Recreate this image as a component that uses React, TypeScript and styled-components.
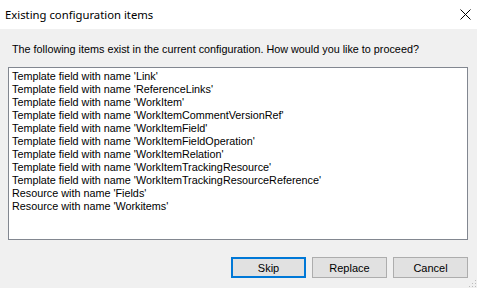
import styled, { createGlobalStyle } from "styled-components";

const GlobalStyle = createGlobalStyle`
  html, body {
    margin: 0;
    padding: 0;
    width: 477px;
    height: 288px;
    overflow: hidden;
    background: #f0f0f0;
  }
  * { box-sizing: border-box; }
`;

const Window = styled.div`
  width: 477px;
  height: 288px;
  display: flex;
  flex-direction: column;
  background: #f0f0f0;
  font-family: "Liberation Sans", Arial, sans-serif;
  font-size: 10.8px;
  color: #000;
  position: relative;
`;

const TitleBar = styled.div`
  height: 29px;
  background: #fff;
  display: flex;
  align-items: center;
  justify-content: space-between;
  padding-left: 5px;
`;

const Title = styled.div`
  font-family: "Noto Sans", "Open Sans", sans-serif;
  font-size: 11.3px;
  color: #000;
`;

const CloseButton = styled.div`
  width: 24px;
  height: 29px;
  display: flex;
  align-items: center;
  justify-content: center;
`;

const Body = styled.div`
  flex: 1;
  display: flex;
  flex-direction: column;
  padding: 14px 9px 0 8px;
`;

const Prompt = styled.div`
  padding-left: 4px;
  line-height: 13px;
  height: 13px;
`;

const ListBox = styled.div`
  margin-top: 11px;
  height: 173px;
  background: #fff;
  border: 1px solid #828790;
  padding: 2px 3px;
  display: flex;
  flex-direction: column;
`;

const ListItem = styled.div`
  height: 13px;
  line-height: 13px;
  white-space: nowrap;
`;

const ButtonRow = styled.div`
  margin-top: 17px;
  display: flex;
  justify-content: flex-end;
  gap: 6px;
`;

const Button = styled.div<{ $default?: boolean }>`
  width: 75px;
  height: 21px;
  display: flex;
  align-items: center;
  justify-content: center;
  background: #e1e1e1;
  border: ${(p) => (p.$default ? "2px solid #0078d7" : "1px solid #adadad")};
  font-size: 11px;
`;

const Grip = styled.svg`
  position: absolute;
  right: 0;
  bottom: 0;
`;

const items = [
  "Template field with name 'Link'",
  "Template field with name 'ReferenceLinks'",
  "Template field with name 'WorkItem'",
  "Template field with name 'WorkItemCommentVersionRef'",
  "Template field with name 'WorkItemField'",
  "Template field with name 'WorkItemFieldOperation'",
  "Template field with name 'WorkItemRelation'",
  "Template field with name 'WorkItemTrackingResource'",
  "Template field with name 'WorkItemTrackingResourceReference'",
  "Resource with name 'Fields'",
  "Resource with name 'Workitems'",
];

export default function App() {
  return (
    <>
      <GlobalStyle />
      <Window>
        <TitleBar>
          <Title>Existing configuration items</Title>
          <CloseButton>
            <svg width="11" height="11" viewBox="0 0 11 11">
              <path d="M0.5 0.5 L10.5 10.5 M10.5 0.5 L0.5 10.5" stroke="#000" strokeWidth="1" />
            </svg>
          </CloseButton>
        </TitleBar>
        <Body>
          <Prompt>
            The following items exist in the current configuration. How would you like to proceed?
          </Prompt>
          <ListBox>
            {items.map((it) => (
              <ListItem key={it}>{it}</ListItem>
            ))}
          </ListBox>
          <ButtonRow>
            <Button $default>Skip</Button>
            <Button>Replace</Button>
            <Button>Cancel</Button>
          </ButtonRow>
        </Body>
        <Grip width="8" height="8" viewBox="0 0 8 8">
          <rect x="6" y="0" width="1" height="1" fill="#bcbcbc" />
          <rect x="3" y="3" width="1" height="1" fill="#bcbcbc" />
          <rect x="6" y="3" width="1" height="1" fill="#bcbcbc" />
          <rect x="0" y="6" width="1" height="1" fill="#bcbcbc" />
          <rect x="3" y="6" width="1" height="1" fill="#bcbcbc" />
          <rect x="6" y="6" width="1" height="1" fill="#bcbcbc" />
        </Grip>
      </Window>
    </>
  );
}
